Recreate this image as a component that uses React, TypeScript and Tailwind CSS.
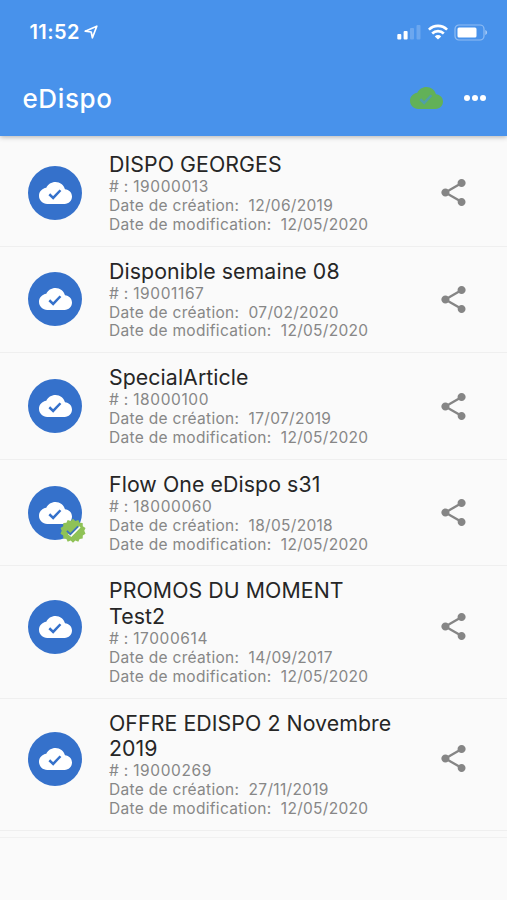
type Dispo = {
  title: string;
  id: string;
  created: string;
  modified: string;
  verified?: boolean;
};

const items: Dispo[] = [
  { title: "DISPO GEORGES", id: "19000013", created: "12/06/2019", modified: "12/05/2020" },
  { title: "Disponible semaine 08", id: "19001167", created: "07/02/2020", modified: "12/05/2020" },
  { title: "SpecialArticle", id: "18000100", created: "17/07/2019", modified: "12/05/2020" },
  { title: "Flow One eDispo s31", id: "18000060", created: "18/05/2018", modified: "12/05/2020", verified: true },
  { title: "PROMOS DU MOMENT Test2", id: "17000614", created: "14/09/2017", modified: "12/05/2020" },
  { title: "OFFRE EDISPO 2 Novembre 2019", id: "19000269", created: "27/11/2019", modified: "12/05/2020" },
];

function CloudCheck({ className, check }: { className: string; check: string }) {
  return (
    <svg viewBox="0 4 24 16" className={className}>
      <path
        fill="currentColor"
        d="M18.9 9.3C18 6.1 15.3 4 12 4 9 4 6.4 5.7 5.3 8.2 2.3 8.6 0 11 0 14c0 3.31 2.69 6 6 6h12.6c3 0 5.4-2.4 5.4-5.4 0-2.8-2.2-5.1-5.1-5.3z"
      />
      <path d="M7.5 12.9l2.8 2.7 5.3-5.6" fill="none" stroke={check} strokeWidth="1.8" />
    </svg>
  );
}

function VerifiedBadge() {
  return (
    <svg viewBox="0 0 26 26" className="absolute left-[32px] top-[32px] size-[26px]">
      <path
        fill="#8fc256"
        d="M13 .8l2.3 2.2 3-1.1 1.3 2.8 3.1.3.1 3.2 2.7 1.7-1.2 2.9 1.2 2.9-2.7 1.7-.1 3.2-3.1.3-1.3 2.8-3-1.1L13 24.8l-2.3-2.2-3 1.1-1.3-2.8-3.1-.3-.1-3.2-2.7-1.7 1.2-2.9-1.2-2.9 2.7-1.7.1-3.2 3.1-.3 1.3-2.8 3 1.1z"
      />
      <path d="M8.6 15.6l2.6 2.1 8.7-8.9" fill="none" stroke="#fff" strokeWidth="1.8" />
      <path d="M6.9 12.8l3.4 3.4 7.8-7.9" fill="none" stroke="#3c72bd" strokeWidth="1.7" />
    </svg>
  );
}

function ShareIcon() {
  return (
    <svg viewBox="3 2 18 20" className="h-[27px] w-[25px] text-[#858585]" fill="currentColor">
      <path d="M18 16.08c-.76 0-1.44.3-1.96.77L8.91 12.7c.05-.23.09-.46.09-.7s-.04-.47-.09-.7l7.05-4.11c.54.5 1.25.81 2.04.81 1.66 0 3-1.34 3-3s-1.34-3-3-3-3 1.34-3 3c0 .24.04.47.09.7L8.04 9.81C7.5 9.31 6.79 9 6 9c-1.66 0-3 1.34-3 3s1.34 3 3 3c.79 0 1.5-.31 2.04-.81l7.12 4.16c-.05.21-.08.43-.08.65 0 1.61 1.31 2.92 2.92 2.92s2.92-1.31 2.92-2.92-1.31-2.92-2.92-2.92z" />
    </svg>
  );
}

function StatusBar() {
  return (
    <div className="flex h-[62px] items-center pr-[19px] pl-[29.5px] pt-[2px]">
      <span className="text-[20px] font-semibold tracking-[0.4px]">11:52</span>
      <svg viewBox="0 0 14 14" className="ml-[4px] size-[14px]">
        <path d="M1.2 6.2L12.8 1.2 8.4 12.8 7.2 7z" fill="none" stroke="currentColor" strokeWidth="1.7" strokeLinejoin="round" />
      </svg>
      <svg viewBox="0 0 24 16" className="ml-auto h-4 w-6" fill="currentColor">
        <rect x="0.3" y="10" width="4" height="5.5" rx="1" />
        <rect x="6.6" y="7" width="4" height="8.5" rx="1" />
        <rect x="13" y="4" width="4" height="11.5" rx="1" opacity="0.2" />
        <rect x="19.5" y="1" width="4" height="14.5" rx="1" opacity="0.2" />
      </svg>
      <svg viewBox="0 0 20 16" className="ml-[7px] h-4 w-5" fill="none" stroke="currentColor" strokeWidth="2.6">
        <path d="M.9 5.6a13 13 0 0 1 18.2 0" />
        <path d="M4.2 9.5a8.2 8.2 0 0 1 11.6 0" />
        <path d="M10 15.6l-3.2-3.2a4.6 4.6 0 0 1 6.4 0z" fill="currentColor" stroke="none" />
      </svg>
      <svg viewBox="0 0 34 17" className="ml-[6px] h-[17px] w-[34px]" fill="currentColor">
        <rect x="1" y="1" width="29" height="15" rx="4" fill="none" stroke="currentColor" strokeWidth="1.2" opacity="0.4" />
        <rect x="3.5" y="3.5" width="19" height="10" rx="1.5" />
        <path d="M31.3 6v5c1.2-.4 1.8-1.3 1.8-2.5S32.5 6.4 31.3 6z" opacity="0.5" />
      </svg>
    </div>
  );
}

function DispoRow({ item }: { item: Dispo }) {
  // icons sit a bit above the middle when the title takes two lines
  const wraps = item.title.length > 21;
  const iconOffset = wraps ? "mb-[12px]" : "mb-[1px]";

  return (
    <li className="flex items-center border-b border-[#efefef] pt-[12px] pr-[41px] pb-[10.9px] pl-[28px]">
      <div
        className={`relative flex size-[54px] shrink-0 items-center justify-center rounded-full bg-[#3571cb] text-white ${iconOffset}`}
      >
        <CloudCheck className="h-[22px] w-[33px]" check="#3571cb" />
        {item.verified && <VerifiedBadge />}
      </div>
      <div className="ml-[27px] w-[290px]">
        <h2 className="text-[21.3px] leading-[25.5px] tracking-[0.08px] text-[#262626]">{item.title}</h2>
        <div className="pt-[0.5px] text-[15.5px] leading-[18.9px] tracking-[0.3px] whitespace-pre text-[#878787]">
          <p># : <span className="tracking-[0.6px]">{item.id}</span></p>
          <p>Date de création:{"  "}{item.created}</p>
          <p>Date de modification:{"  "}{item.modified}</p>
        </div>
      </div>
      <button className={`ml-auto ${iconOffset}`}>
        <ShareIcon />
      </button>
    </li>
  );
}

export default function App() {
  return (
    <div className="h-[900px] w-[507px] overflow-hidden bg-[#fafafa] font-['Inter',sans-serif]">
      <header className="relative h-[136px] bg-[#4892eb] text-white shadow-[0_1px_5px_rgba(0,0,0,0.3)]">
        <StatusBar />
        <div className="flex h-[72px] items-center pr-[21px] pl-[22.5px]">
          <h1 className="text-[26px] font-medium tracking-[0.6px]">eDispo</h1>
          <CloudCheck className="ml-auto h-[22px] w-[33px] text-[#62b158]" check="#509fa8" />
          <div className="ml-[21px] flex gap-[2px]">
            <span className="size-[6px] rounded-full bg-white" />
            <span className="size-[6px] rounded-full bg-white" />
            <span className="size-[6px] rounded-full bg-white" />
          </div>
        </div>
      </header>
      <ul className="border-b border-[#f1f1f1] pt-[4px] pb-[6px]">
        {items.map((item) => (
          <DispoRow key={item.id} item={item} />
        ))}
      </ul>
    </div>
  );
}
